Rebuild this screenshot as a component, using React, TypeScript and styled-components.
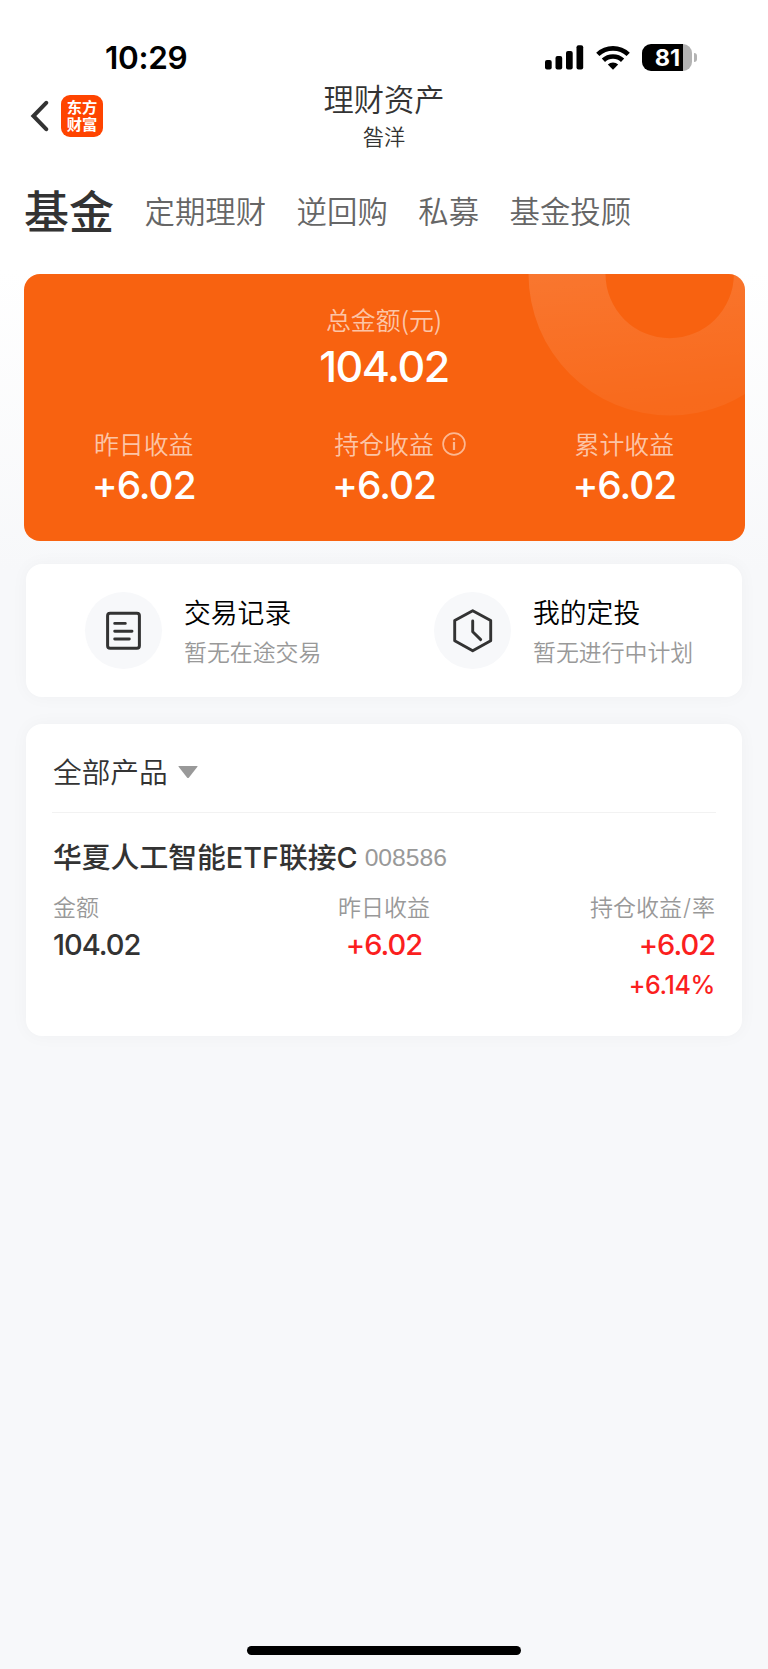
import React from "react";
import styled, { createGlobalStyle } from "styled-components";

const GlobalStyle = createGlobalStyle`
  *, *::before, *::after { box-sizing: border-box; }
  body {
    margin: 0;
    background: #f7f8fa;
    color: #333;
    font-family: Inter, "Noto Sans CJK SC", sans-serif;
    font-weight: 350;
  }
`;

const Screen = styled.div`
  display: flex;
  flex-direction: column;
  width: 768px;
  height: 1669px;
  overflow: hidden;
  background: linear-gradient(#fff 0, #fff 270px, #f7f8fa 570px);
`;

const StatusBar = styled.header`
  display: flex;
  justify-content: space-between;
  align-items: center;
  height: 82px;
  padding: 32px 71px 0 105px;
`;

const Clock = styled.time`
  padding-top: 1px;
  font-size: 31.5px;
  font-weight: 600;
  line-height: 50px;
  letter-spacing: -0.3px;
  color: #000;
`;

const StatusIcons = styled.div`
  display: flex;
  align-items: center;
  gap: 12px;
`;

const Battery = styled.div`
  position: relative;
  display: flex;
  justify-content: center;
  width: 50px;
  height: 27px;
  margin-right: 5px;
  padding-left: 1px;
  border-radius: 9px;
  background: linear-gradient(90deg, #000 41px, #b3b3b3 41px);
  color: #fff;
  font-size: 23.5px;
  font-weight: 700;
  line-height: 27px;

  &::after {
    content: "";
    position: absolute;
    right: -5px;
    top: 9px;
    width: 3px;
    height: 9px;
    border-radius: 0 5px 5px 0;
    background: #b3b3b3;
  }
`;

const NavBar = styled.nav`
  display: grid;
  grid-template-columns: 1fr auto 1fr;
  height: 82px;
`;

const NavStart = styled.div`
  display: flex;
  align-items: flex-start;
  gap: 12px;
  padding: 12.5px 0 0 30px;
`;

const BackIcon = styled.svg`
  width: 19px;
  height: 32px;
  margin-top: 5.5px;
`;

const AppLogo = styled.div`
  width: 42px;
  height: 42px;
  padding-top: 3px;
  border-radius: 9px;
  background: #ff4400;
  color: #fff;
  font-family: "Noto Sans CJK SC", sans-serif;
  font-size: 15.3px;
  font-weight: 700;
  line-height: 17.5px;
  text-align: center;
`;

const Heading = styled.div`
  text-align: center;
`;

const Title = styled.h1`
  margin: 0;
  font-size: 30.3px;
  font-weight: 350;
  line-height: 37px;
`;

const Subtitle = styled.div`
  margin-top: 4px;
  font-size: 21.2px;
  line-height: 28px;
`;

const Tabs = styled.div`
  display: flex;
  align-items: center;
  gap: 30.5px;
  height: 110px;
  padding: 0 24px 13.5px;
`;

const Tab = styled.div<{ $active?: boolean }>`
  padding-top: ${(p) => (p.$active ? 2 : 0)}px;
  color: ${(p) => (p.$active ? "#333" : "#666")};
  font-size: ${(p) => (p.$active ? 45 : 30.4)}px;
  font-weight: ${(p) => (p.$active ? 500 : 350)};
  line-height: 60px;
`;

const Summary = styled.section`
  position: relative;
  height: 267px;
  margin: 0 23.5px;
  padding-top: 28.5px;
  border-radius: 16px;
  overflow: hidden;
  background: #f86210;
  text-align: center;
`;

const Rings = styled.svg`
  position: absolute;
  top: 0;
  right: 0;
  width: 217px;
  height: 142px;
`;

const SummaryLabel = styled.div`
  position: relative;
  display: inline-block;
  color: rgba(255, 255, 255, 0.65);
  font-family: "Noto Sans CJK SC", sans-serif;
  font-size: 24.9px;
  line-height: 32px;
`;

const Total = styled.div`
  position: relative;
  margin-top: 7px;
  color: #fff;
  font-size: 43px;
  font-weight: 550;
  line-height: 48px;
  letter-spacing: -1.5px;
`;

const SummaryRow = styled.div`
  position: relative;
  display: grid;
  grid-template-columns: repeat(3, 1fr);
  margin-top: 37.5px;
`;

const Gain = styled.div`
  margin-top: 4px;
  color: #fff;
  font-size: 38.8px;
  font-weight: 550;
  line-height: 44px;
  letter-spacing: -1px;
`;

const InfoIcon = styled.svg`
  position: absolute;
  left: calc(100% + 8.5px);
  top: 5px;
  width: 24px;
  height: 24px;
`;

const Card = styled.section`
  margin: 0 26px;
  border-radius: 16px;
  background: #fff;
  box-shadow: 0 0 18px rgba(0, 0, 0, 0.035);
`;

const Shortcuts = styled(Card)`
  display: grid;
  grid-template-columns: 349px 1fr;
  height: 133px;
  margin-top: 23px;
  padding: 28px 0 0 59px;
`;

const Shortcut = styled.div`
  display: flex;
  gap: 22px;
`;

const IconDisc = styled.div`
  width: 77px;
  height: 77px;
  border-radius: 50%;
  background: #f7f8fa;

  svg { display: block; }
`;

const ShortcutName = styled.div`
  padding-top: 1px;
  color: #000;
  font-size: 26.8px;
  line-height: 41px;
`;

const ShortcutNote = styled.div`
  color: #999;
  font-family: "Noto Sans CJK SC", sans-serif;
  font-size: 22.9px;
  line-height: 35px;
`;

const Products = styled(Card)`
  height: 312px;
  margin-top: 27px;
  padding: 0 26px;
`;

const Filter = styled.div`
  display: flex;
  align-items: center;
  gap: 10.5px;
  height: 89px;
  padding: 4px 1px 0;
  border-bottom: 1px solid #f2f2f2;
  font-size: 28.7px;

  svg { margin-top: 3px; }
`;

const Fund = styled.div`
  display: flex;
  align-items: center;
  gap: 7px;
  height: 42px;
  margin-top: 23.5px;
  padding: 0 1px;
`;

const FundName = styled.div`
  font-size: 28.8px;
  font-weight: 500;
  line-height: 42px;
  white-space: nowrap;
`;

const FundCode = styled.div`
  color: #999;
  font-family: "Liberation Sans", sans-serif;
  font-size: 24.7px;
`;

const Stats = styled.div`
  display: grid;
  grid-template-columns: repeat(3, 1fr);
  margin-top: 12.5px;
  padding: 0 1px;
`;

const Stat = styled.div<{ $align: "left" | "center" | "right" }>`
  text-align: ${(p) => p.$align};
`;

const StatLabel = styled.div`
  color: #999;
  font-size: 23px;
  line-height: 34px;
`;

const Slash = styled.span`
  margin: 0 1px;
`;

const StatValue = styled.div<{ $up?: boolean; $small?: boolean }>`
  color: ${(p) => (p.$up ? "#fb1f1f" : "#333")};
  font-size: ${(p) => (p.$small ? 25 : 29)}px;
  font-weight: 480;
  line-height: ${(p) => (p.$small ? 42 : 39)}px;
  letter-spacing: ${(p) => (p.$small ? -0.4 : -1)}px;
`;

const HomeBar = styled.div`
  width: 274px;
  height: 9px;
  margin: auto auto 14.5px;
  border-radius: 5px;
  background: #000;
`;

const tabs = ["基金", "定期理财", "逆回购", "私募", "基金投顾"];

const Signal = () => (
  <svg width="39" height="25" viewBox="0 0 39 25">
    <rect x="0" y="15" width="6.7" height="9.5" rx="2" />
    <rect x="10.5" y="11" width="6.7" height="13.5" rx="2" />
    <rect x="21" y="6" width="6.7" height="18.5" rx="2" />
    <rect x="31.5" y="0.3" width="6.7" height="24.2" rx="2" />
  </svg>
);

const Wifi = () => (
  <svg width="34" height="25" viewBox="0 0 34 25">
    <g fill="none" stroke="#000" strokeWidth="4.7">
      <path d="M1.8 9.4a22 22 0 0 1 30.4 0" />
      <path d="M7.4 15.3a14 14 0 0 1 19.2 0" />
    </g>
    <path d="M17 24.7l-5.2-5.2a7.5 7.5 0 0 1 10.4 0z" />
  </svg>
);

export default function App() {
  return (
    <>
      <GlobalStyle />
      <Screen>
        <StatusBar>
          <Clock>10:29</Clock>
          <StatusIcons>
            <Signal />
            <Wifi />
            <Battery>81</Battery>
          </StatusIcons>
        </StatusBar>

        <NavBar>
          <NavStart>
            <BackIcon viewBox="0 0 19 32" fill="none" stroke="#333" strokeWidth="4" strokeLinecap="round">
              <path d="M16.2 2.8L3.4 16l12.8 13.2" />
            </BackIcon>
            <AppLogo>东方<br />财富</AppLogo>
          </NavStart>
          <Heading>
            <Title>理财资产</Title>
            <Subtitle>昝洋</Subtitle>
          </Heading>
        </NavBar>

        <Tabs>
          {tabs.map((name, i) => (
            <Tab key={name} $active={i === 0}>{name}</Tab>
          ))}
        </Tabs>

        <Summary>
          <Rings viewBox="0 0 217 142">
            <defs>
              <linearGradient id="ring" x1="0" y1="0" x2="0.25" y2="1">
                <stop offset="0" stopColor="#fff" stopOpacity="0.13" />
                <stop offset="1" stopColor="#fff" stopOpacity="0.05" />
              </linearGradient>
            </defs>
            <path
              fill="url(#ring)"
              fillRule="evenodd"
              d="M0.5 0a141.5 141.5 0 0 0 283 0zM77.5 0a64.2 64.2 0 0 0 128.4 0z"
            />
          </Rings>
          <SummaryLabel>总金额(元)</SummaryLabel>
          <Total>104.02</Total>
          <SummaryRow>
            <div>
              <SummaryLabel>昨日收益</SummaryLabel>
              <Gain>+6.02</Gain>
            </div>
            <div>
              <SummaryLabel>
                持仓收益
                <InfoIcon viewBox="0 0 24 24" fill="none" stroke="#fcb791" strokeWidth="1.7">
                  <circle cx="12" cy="12" r="10.9" />
                  <path d="M12 10v8M12 6v2.2" strokeWidth="2.2" />
                </InfoIcon>
              </SummaryLabel>
              <Gain>+6.02</Gain>
            </div>
            <div>
              <SummaryLabel>累计收益</SummaryLabel>
              <Gain>+6.02</Gain>
            </div>
          </SummaryRow>
        </Summary>

        <Shortcuts>
          <Shortcut>
            <IconDisc>
              <svg width="77" height="77" viewBox="0 0 77 77" fill="none" stroke="#333" strokeWidth="3" strokeLinecap="round">
                <rect x="22.6" y="21.3" width="31.8" height="35" rx="2.5" />
                <path d="M29.7 31.4h10.6M29.7 39.3H47M29.7 47h14.6" strokeWidth="2.9" />
              </svg>
            </IconDisc>
            <div>
              <ShortcutName>交易记录</ShortcutName>
              <ShortcutNote>暂无在途交易</ShortcutNote>
            </div>
          </Shortcut>
          <Shortcut>
            <IconDisc>
              <svg width="77" height="77" viewBox="0 0 77 77" fill="none" stroke="#333" strokeWidth="2.9" strokeLinecap="round" strokeLinejoin="round">
                <path d="M38.7 18.8l18 9.8v20.2l-18 9.9-18-9.9V28.6z" />
                <path d="M38.7 29v10.8l8 7.8" />
              </svg>
            </IconDisc>
            <div>
              <ShortcutName>我的定投</ShortcutName>
              <ShortcutNote>暂无进行中计划</ShortcutNote>
            </div>
          </Shortcut>
        </Shortcuts>

        <Products>
          <Filter>
            全部产品
            <svg width="20" height="12" viewBox="0 0 20 12" fill="#999">
              <path d="M1 0h18q1 0 .4.8l-8.4 10.6q-1 1-2 0L.6.8Q0 0 1 0z" />
            </svg>
          </Filter>
          <Fund>
            <FundName>华夏人工智能ETF联接C</FundName>
            <FundCode>008586</FundCode>
          </Fund>
          <Stats>
            <Stat $align="left">
              <StatLabel>金额</StatLabel>
              <StatValue>104.02</StatValue>
            </Stat>
            <Stat $align="center">
              <StatLabel>昨日收益</StatLabel>
              <StatValue $up>+6.02</StatValue>
            </Stat>
            <Stat $align="right">
              <StatLabel>持仓收益<Slash>/</Slash>率</StatLabel>
              <StatValue $up>+6.02</StatValue>
              <StatValue $up $small>+6.14%</StatValue>
            </Stat>
          </Stats>
        </Products>
        <HomeBar />
      </Screen>
    </>
  );
}
